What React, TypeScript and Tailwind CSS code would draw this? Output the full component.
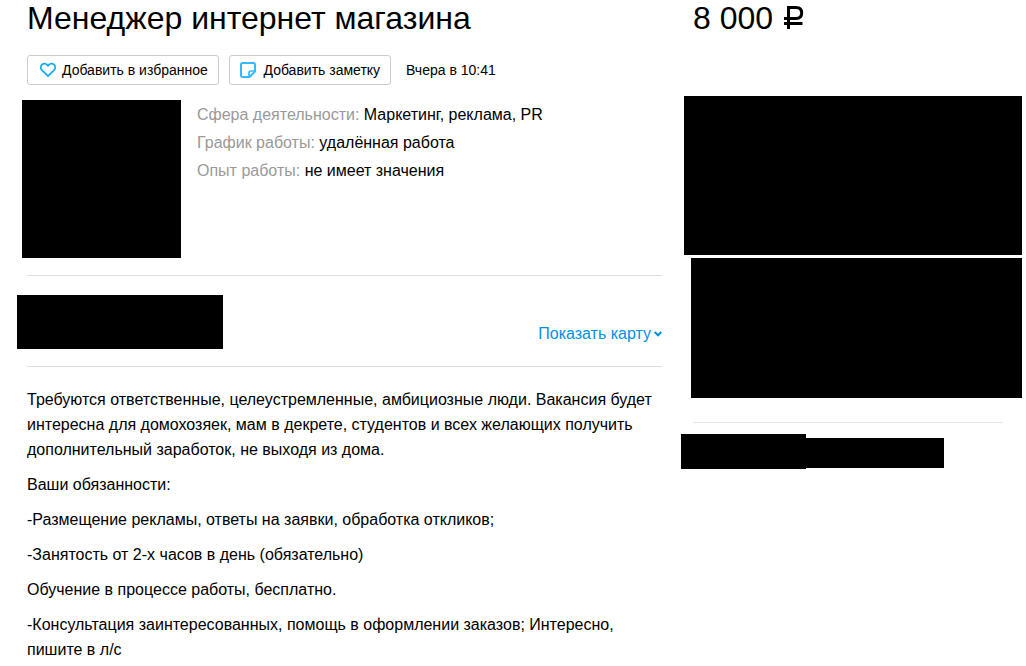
import React from "react";

const params = [
  { label: "Сфера деятельности:", value: "Маркетинг, реклама, PR" },
  { label: "График работы:", value: "удалённая работа" },
  { label: "Опыт работы:", value: "не имеет значения" },
];

const description = [
  "Требуются ответственные, целеустремленные, амбициозные люди. Вакансия будет интересна для домохозяек, мам в декрете, студентов и всех желающих получить дополнительный заработок, не выходя из дома.",
  "Ваши обязанности:",
  "-Размещение рекламы, ответы на заявки, обработка откликов;",
  "-Занятость от 2-х часов в день (обязательно)",
  "Обучение в процессе работы, бесплатно.",
  "-Консультация заинтересованных, помощь в оформлении заказов; Интересно, пишите в л/с",
];

const HeartIcon = () => (
  <svg width="16" height="16" viewBox="0 0 16 16" fill="none" stroke="#1aabf5" strokeWidth="1.8" strokeLinejoin="round">
    <path d="M8 14.200 1.900 8.100C.4 6.500.5 4.100 1.900 2.700c1.600-1.500 4-1.300 5.300.2L8 3.800l.8-.9c1.300-1.500 3.700-1.700 5.300-.2 1.400 1.400 1.500 3.800 0 5.400L8 14.200Z" />
  </svg>
);

const NoteIcon = () => (
  <svg width="16" height="16" viewBox="0 0 16 16" fill="none" stroke="#37b8fc" strokeWidth="2" strokeLinejoin="round">
    <path d="M2.500 1h11c.9 0 1.500.6 1.500 1.500V9.500L9.500 15H2.500C1.600 15 1 14.400 1 13.500v-11C1 1.600 1.600 1 2.500 1Z" />
    <path d="M9 15v-4c0-1.200.8-2 2-2H15" strokeWidth="1.700" />
  </svg>
);

const RubleIcon = () => (
  <svg width="21" height="23" viewBox="0 0 21 23" fill="none" stroke="#000" strokeWidth="3">
    <path d="M5.500 23V1.500h7.500c4 0 5.700 2 5.700 5.300s-1.700 5.700-5.700 5.700H1M1 17.500h18.500" />
  </svg>
);

const App = () => {
  return (
    <div className="flex h-[666px] w-[1026px] overflow-hidden bg-white font-['Liberation_Sans',Arial,sans-serif] text-base text-black">
      {/* Vacancy */}
      <main className="ml-[27px] w-[635px] shrink-0">
        <h1 className="h-[55px] pt-px text-[32px] leading-[35px] whitespace-nowrap">Менеджер интернет магазина</h1>
        <div className="flex items-center text-sm whitespace-nowrap">
          <button className="flex h-[30px] w-[192px] items-center gap-[6px] rounded-[3px] border border-[#ccc] pl-3">
            <HeartIcon />
            Добавить в избранное
          </button>
          <button className="ml-[10px] flex h-[30px] w-[162px] items-center gap-[7.5px] rounded-[3px] border border-[#ccc] pl-[10px]">
            <NoteIcon />
            Добавить заметку
          </button>
          <span className="ml-[15px]">Вчера в 10:41</span>
        </div>
        <div className="mt-[15px] flex h-[175px]">
          <div className="-ml-[5px] h-[158px] w-[159px] bg-black"></div>
          <div className="ml-4 pt-px">
            {params.map((param) => (
              <div key={param.label} className="leading-[28px]">
                <span className="text-[#999]">{param.label}</span> {param.value}
              </div>
            ))}
          </div>
        </div>
        {/* Address */}
        <div className="flex h-[92px] justify-between border-y border-[#ddd] pt-[19px]">
          <div className="-ml-[10px] h-[54px] w-[206px] bg-black"></div>
          <a className="mt-[29px] flex h-5 items-center gap-[3px] leading-5 text-[#0091e4]">
            Показать карту
            <svg width="8" height="6" viewBox="0 0 8 6" fill="none" stroke="#0091d9" strokeWidth="2">
              <path d="M.7 1 4 4.300 7.300 1" />
            </svg>
          </a>
        </div>
        <div className="mt-5 flex flex-col gap-[10px] leading-[25px]">
          {description.map((text) => (
            <p key={text}>{text}</p>
          ))}
        </div>
      </main>
      {/* Price and contacts */}
      <aside className="ml-[19px] w-[345px] shrink-0">
        <div className="ml-3 flex h-24 items-start gap-[10px] pt-px text-[32px] leading-[35px]">
          8 000
          <span className="mt-[5px]">
            <RubleIcon />
          </span>
        </div>
        <div className="ml-[3px] h-[159px] w-[338px] bg-black"></div>
        <div className="mt-[3px] ml-[10px] h-[140px] w-[331px] bg-black"></div>
        <div className="mt-6 ml-3 w-[310px] border-t border-[#e8e8e8]"></div>
        <div className="mt-[11px] flex">
          <div className="h-[35px] w-[125px] bg-black"></div>
          <div className="mt-1 h-[30px] w-[138px] bg-black"></div>
        </div>
      </aside>
    </div>
  );
};

export default App;
